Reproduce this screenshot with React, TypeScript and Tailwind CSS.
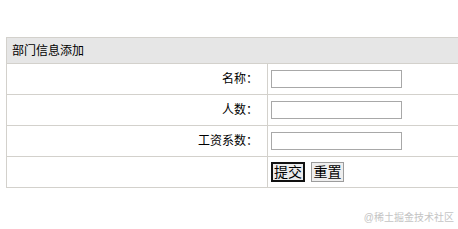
export default function App() {
  const rows = ['名称：', '人数：', '工资系数：'];

  return (
    <div className="relative w-[458px] h-[229px] overflow-hidden bg-white text-black font-['Liberation_Sans','Noto_Sans_CJK_SC',sans-serif] text-[12px] leading-none">
      <div className="ml-[6px] mt-[37px] w-[480px] border-l border-t border-[#d3d1cc]">
        {/* header */}
        <div className="h-[26px] bg-[#e6e6e6] border-b border-[#d3d1cc] flex items-center pl-[5px]">
          部门信息添加
        </div>

        {rows.map((label) => (
          <div key={label} className="h-[31px] flex border-b border-[#d3d1cc]">
            <div className="w-[261px] border-r border-[#d3d1cc] flex items-center justify-end pr-[9px]">
              {label}
            </div>
            <div className="flex-1 flex items-center pl-[3px]">
              <input className="w-[131px] h-[18px] border border-[#a8a8a8] bg-white outline-none" />
            </div>
          </div>
        ))}

        {/* buttons */}
        <div className="h-[31px] flex border-b border-[#d3d1cc]">
          <div className="w-[261px] border-r border-[#d3d1cc]" />
          <div className="flex-1 flex items-center gap-[6px] pl-[3px]">
            <button className="w-[34px] h-[20px] border-2 border-[#111] bg-[#ececec] text-[14px] flex items-center justify-center">
              提交
            </button>
            <button className="w-[33px] h-[20px] border border-[#9c9c9c] bg-[#eeeeee] text-[14px] flex items-center justify-center">
              重置
            </button>
          </div>
        </div>
      </div>

      <div className="absolute right-[4px] bottom-[6px] text-[10px] text-[#c4c4c4]">
        @稀土掘金技术社区
      </div>
    </div>
  );
}
